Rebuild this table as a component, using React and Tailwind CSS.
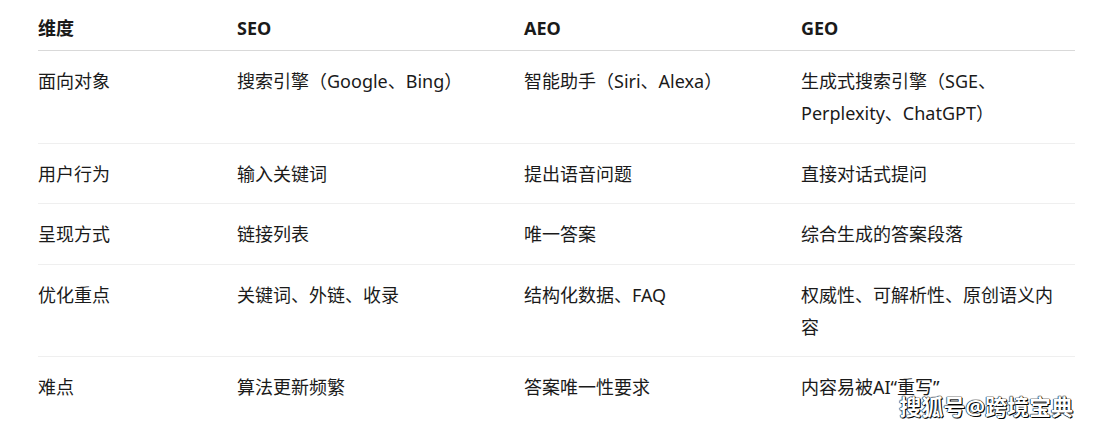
import React from "react";

const rows = [
  ["面向对象", "搜索引擎（Google、Bing）", "智能助手（Siri、Alexa）", "生成式搜索引擎（SGE、Perplexity、ChatGPT）"],
  ["用户行为", "输入关键词", "提出语音问题", "直接对话式提问"],
  ["呈现方式", "链接列表", "唯一答案", "综合生成的答案段落"],
  ["优化重点", "关键词、外链、收录", "结构化数据、FAQ", "权威性、可解析性、原创语义内容"],
  ["难点", "算法更新频繁", "答案唯一性要求", "内容易被AI“重写”"],
];

const cols = "grid grid-cols-[199px_287px_277px_1fr]";

export default function App() {
  return (
    <div
      className="relative w-[1096px] h-[428px] bg-white overflow-hidden px-[38px] pr-[21px] text-[18px] text-[#1a1a1a]"
      style={{ fontFamily: '"Noto Sans", "Noto Sans CJK SC", sans-serif' }}
    >
      {/* header */}
      <div className={`${cols} border-b border-[#d9d9d9] font-bold leading-[32px] pt-[12px] pb-[6px]`}>
        <div className="pr-3">维度</div>
        <div className="pr-3">SEO</div>
        <div className="pr-3">AEO</div>
        <div className="pr-3">GEO</div>
      </div>

      {/* body */}
      {rows.map((r, i) => (
        <div
          key={i}
          className={`${cols} leading-[32px] pt-[14px] pb-[13.5px] ${i < rows.length - 1 ? "border-b border-[#efefef]" : ""}`}
        >
          {r.map((c, j) => (
            <div key={j} className="pr-3">{c}</div>
          ))}
        </div>
      ))}

      {/* watermark */}
      <div className="absolute right-[23px] bottom-[11px] text-[22px] font-bold text-white leading-none [text-shadow:0_0_1px_#000,0_0_1px_#000,0_0_1px_#000,1px_1px_0_#000]">
        搜狐号@跨境宝典
      </div>
    </div>
  );
}
